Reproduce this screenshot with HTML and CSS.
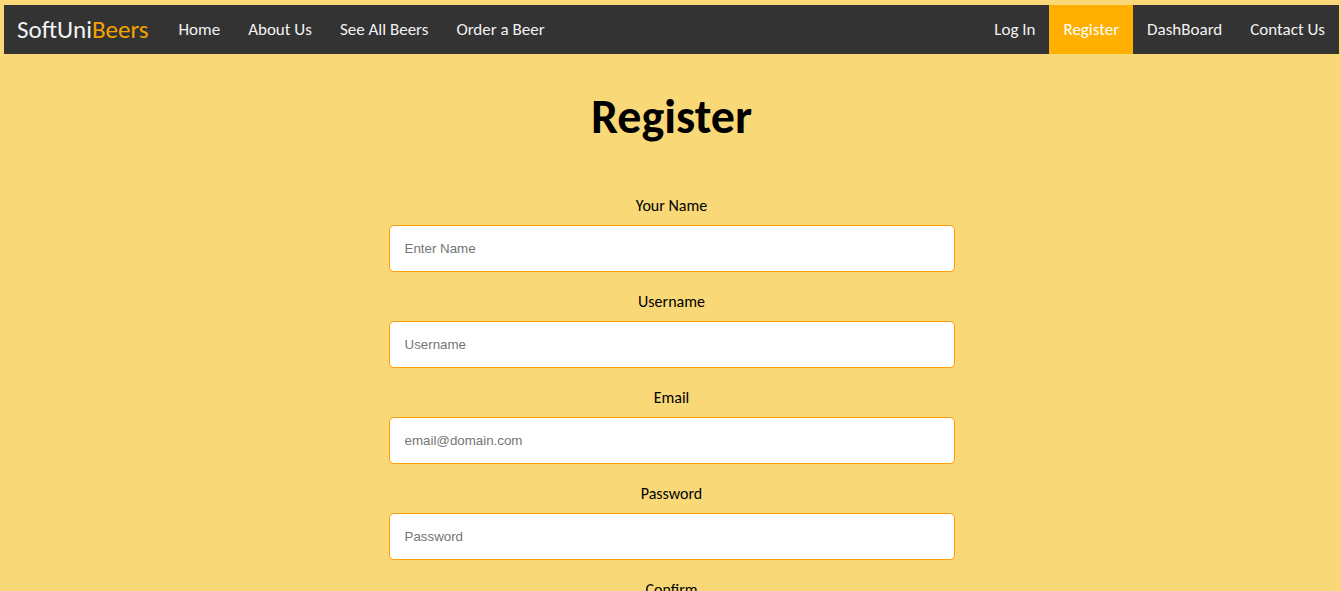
FILE: index.html
```html
<!DOCTYPE html>
<html lang="en">
<head>
<meta charset="utf-8">
<meta name="viewport" content="width=device-width, initial-scale=1">
<title>SoftUniBeers - Register</title>
<link rel="stylesheet" href="styles.css">
</head>
<body>
<nav class="navbar">
  <a class="logo" href="#">SoftUni<span class="logo-accent">Beers</span></a>
  <div class="nav-group">
    <a class="nav-link" href="#">Home</a>
    <a class="nav-link" href="#">About Us</a>
    <a class="nav-link" href="#">See All Beers</a>
    <a class="nav-link" href="#">Order a Beer</a>
  </div>
  <div class="nav-group nav-right">
    <a class="nav-link" href="#">Log In</a>
    <a class="nav-link active" href="#">Register</a>
    <a class="nav-link" href="#">DashBoard</a>
    <a class="nav-link" href="#">Contact Us</a>
  </div>
</nav>
<main class="page">
  <h1 class="title">Register</h1>
  <form class="form">
    <div class="field">
      <label class="label" for="name">Your Name</label>
      <input class="input" type="text" id="name" placeholder="Enter Name">
    </div>
    <div class="field">
      <label class="label" for="username">Username</label>
      <input class="input" type="text" id="username" placeholder="Username">
    </div>
    <div class="field">
      <label class="label" for="email">Email</label>
      <input class="input" type="email" id="email" placeholder="email@domain.com">
    </div>
    <div class="field">
      <label class="label" for="password">Password</label>
      <input class="input" type="password" id="password" placeholder="Password">
    </div>
    <div class="field">
      <label class="label" for="confirm">Confirm</label>
      <input class="input" type="password" id="confirm" placeholder="Confirm Password">
    </div>
  </form>
</main>
</body>
</html>
```

FILE: styles.css
```css
* {
  box-sizing: border-box;
}

html {
  scrollbar-width: none;
}

body {
  margin: 0;
  padding: 5px 2px 5px 4px;
  background: #f9d877;
  color: #000;
  font-family: Calibri, Carlito, Lato, sans-serif;
}

.navbar {
  display: flex;
  align-items: stretch;
  background: #333;
}

.logo {
  padding: 11px 16px 10px 13px;
  color: #f2f2f2;
  font-size: 25px;
  line-height: 28px;
  text-decoration: none;
}

.logo-accent {
  color: #f5a300;
}

.nav-group {
  display: flex;
}

.nav-right {
  margin-left: auto;
}

.nav-link {
  padding: 14px;
  color: #f2f2f2;
  font-size: 17px;
  line-height: 21px;
  text-decoration: none;
  white-space: nowrap;
}

.nav-link.active {
  background: #ffaf00;
  color: #fff;
}

.title {
  margin: 34px 0 50px;
  font-size: 48px;
  line-height: 58px;
  text-align: center;
}

.form {
  display: grid;
  gap: 20px;
  max-width: 566px;
  margin: 0 auto;
}

.field {
  display: flex;
  flex-direction: column;
}

.label {
  padding-bottom: 9px;
  font-size: 16px;
  line-height: 20px;
  text-align: center;
}

.input {
  width: 100%;
  height: 47px;
  padding: 0 15px;
  border: 1px solid #ffa000;
  border-radius: 5px;
  background: #fff;
  font-family: "Liberation Sans", Arial, sans-serif;
}

.input::placeholder {
  color: #757575;
}
```
